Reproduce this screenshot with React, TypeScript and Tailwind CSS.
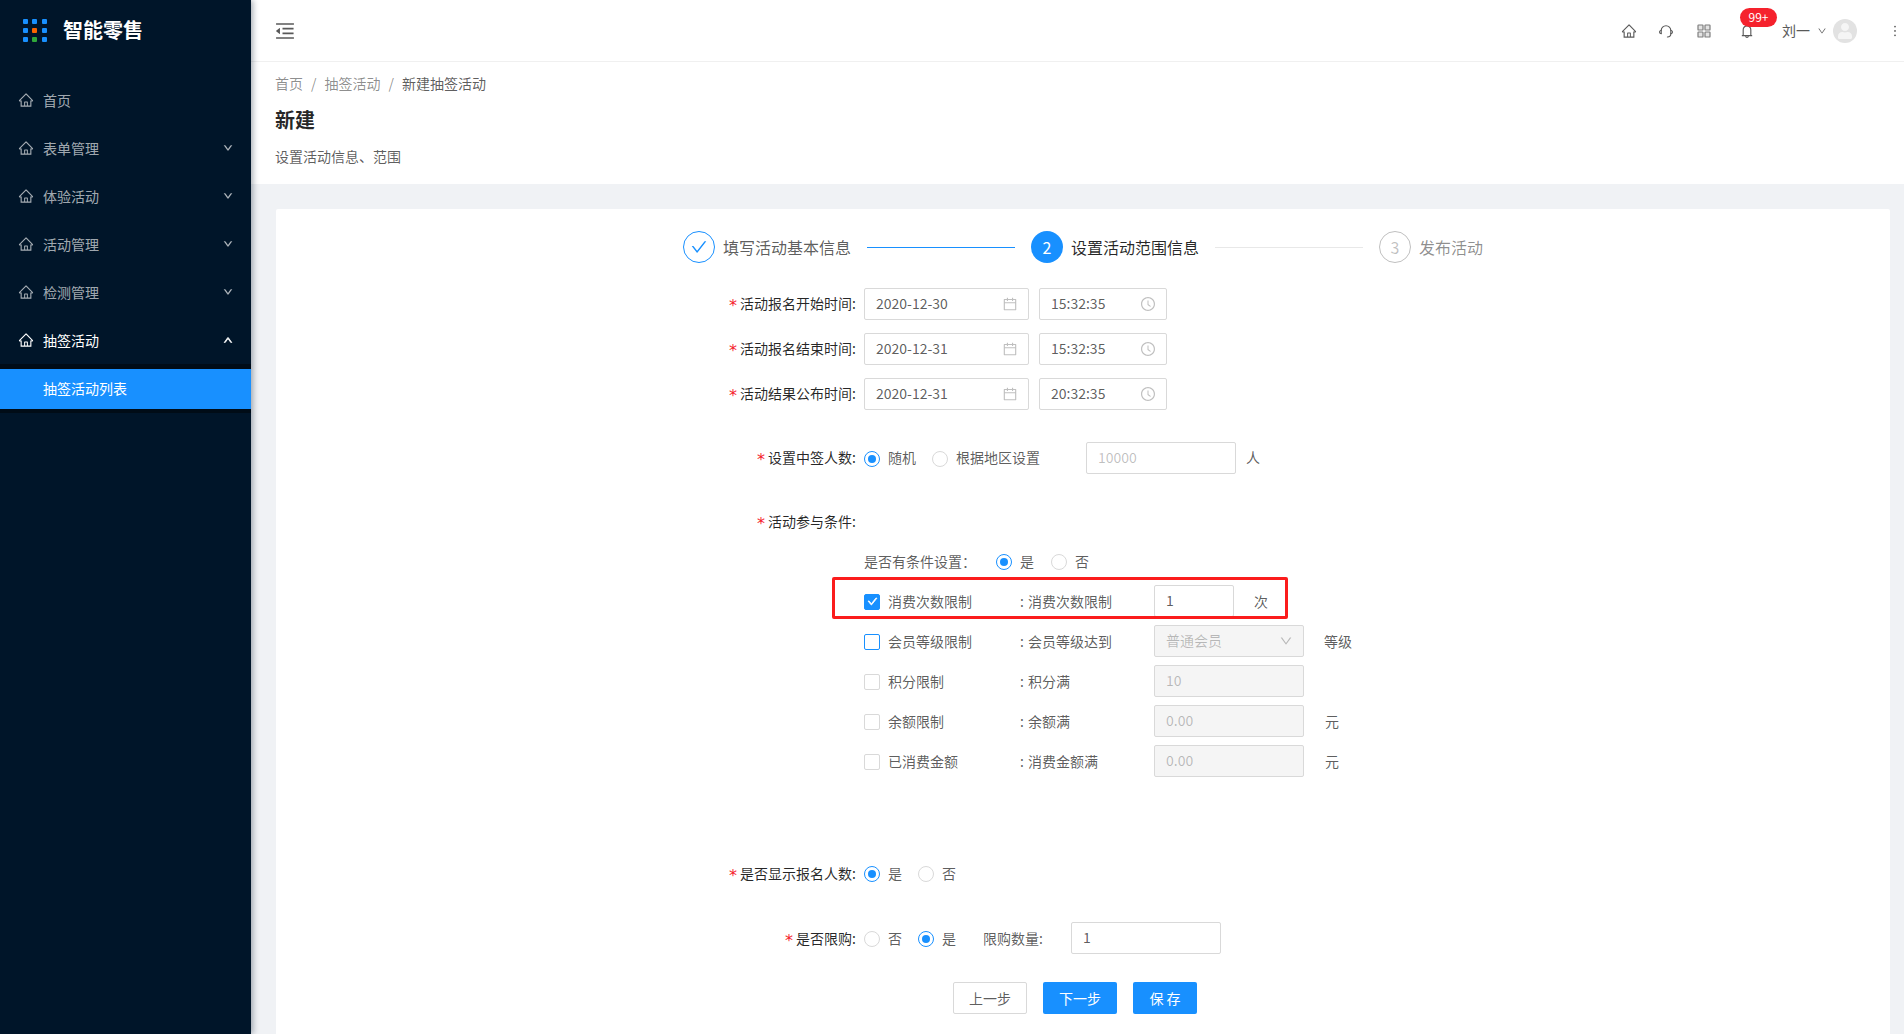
import React from "react";
import {
  AiOutlineHome, AiOutlineDown, AiOutlineUp,
  AiOutlineMore, AiOutlineCalendar, AiOutlineClockCircle, AiOutlineCheck, AiOutlineBell,
} from "react-icons/ai";
import { FaUser } from "react-icons/fa";

const FONT = '"Noto Sans CJK SC", "Liberation Sans", sans-serif';

function OutdentIcon() {
  return (
    <svg viewBox="64 64 896 896" width="20" height="20" fill="currentColor">
      <path d="M408 442h480c4.4 0 8-3.6 8-8v-56c0-4.4-3.6-8-8-8H408c-4.4 0-8 3.6-8 8v56c0 4.4 3.6 8 8 8zm-8 204c0 4.4 3.6 8 8 8h480c4.4 0 8-3.6 8-8v-56c0-4.4-3.6-8-8-8H408c-4.4 0-8 3.6-8 8v56zm504-486H120c-4.4 0-8 3.6-8 8v56c0 4.4 3.6 8 8 8h784c4.4 0 8-3.6 8-8v-56c0-4.4-3.6-8-8-8zm0 632H120c-4.4 0-8 3.6-8 8v56c0 4.4 3.6 8 8 8h784c4.4 0 8-3.6 8-8v-56c0-4.4-3.6-8-8-8zM115.4 518.9L271.7 642c5.8 4.6 14.4.5 14.4-6.9V388.9c0-7.4-8.5-11.5-14.4-6.9L115.4 505.1a8.74 8.74 0 0 0 0 13.8z" />
    </svg>
  );
}

function HeadsetIcon() {
  return (
    <svg viewBox="0 0 16 16" width="16" height="16" fill="none" stroke="currentColor" strokeWidth="1.1" strokeLinecap="round">
      <path d="M3.2 10.5V7.6a4.8 4.8 0 0 1 9.6 0v3.4c0 1.9-1.4 2.9-3.4 3" />
      <path d="M3.2 7.2c-1 .3-1.7.9-1.7 1.8s.7 1.5 1.7 1.8" />
      <path d="M12.8 7.2c1 .3 1.7.9 1.7 1.8s-.7 1.5-1.7 1.8" />
    </svg>
  );
}

function GridIcon() {
  return (
    <svg viewBox="0 0 14 14" width="14" height="14" fill="#e3e3e3" stroke="currentColor" strokeWidth="1.2">
      <rect x="1" y="1" width="5" height="5" rx="0.6" />
      <rect x="8" y="1" width="5" height="5" rx="0.6" />
      <rect x="1" y="8" width="5" height="5" rx="0.6" />
      <rect x="8" y="8" width="5" height="5" rx="0.6" />
    </svg>
  );
}

function MenuItem({ label, arrow, active }: { label: string; arrow?: "down" | "up"; active?: boolean }) {
  return (
    <div className={`flex h-[48px] items-center pl-[18px] pr-[18px] text-[14px] ${active ? "text-white" : "text-[#ffffffa6]"}`}>
      <AiOutlineHome className="mr-[9px] text-[16px]" />
      <span className="flex-1">{label}</span>
      {arrow === "down" && <AiOutlineDown className="text-[10px] stroke-[60]" />}
      {arrow === "up" && <AiOutlineUp className="text-[10px] stroke-[90]" />}
    </div>
  );
}

function Sidebar() {
  const dots = ["#1890ff", "#1890ff", "#1890ff", "#1890ff", "#fa6400", "#1890ff", "#1890ff", "#2fa83a", "#1890ff"];
  return (
    <aside className="z-10 flex w-[251px] shrink-0 flex-col bg-[#001529] shadow-[2px_0_6px_rgba(0,21,41,0.35)]">
      <div className="flex h-[60px] items-center pl-[23px]">
        <div className="grid w-[24px] grid-cols-3 gap-[4px]">
          {dots.map((c, i) => (
            <span key={i} className="h-[5px] w-[5px] rounded-[1px]" style={{ backgroundColor: c }} />
          ))}
        </div>
        <span className="ml-[16px] text-[20px] font-bold leading-none text-white">智能零售</span>
      </div>
      <nav className="mt-[16px]">
        <MenuItem label="首页" />
        <MenuItem label="表单管理" arrow="down" />
        <MenuItem label="体验活动" arrow="down" />
        <MenuItem label="活动管理" arrow="down" />
        <MenuItem label="检测管理" arrow="down" />
        <MenuItem label="抽签活动" arrow="up" active />
        <div className="bg-[#000c17] pb-[4px] pt-[5px]">
          <div className="flex h-[40px] items-center bg-[#1890ff] pb-[2px] pl-[43px] text-[14px] text-white">抽签活动列表</div>
        </div>
      </nav>
    </aside>
  );
}

function Topbar() {
  return (
    <header className="flex h-[62px] shrink-0 items-center border-b border-[#f0f0f0] bg-white pl-[24px] text-[#595959]">
      <OutdentIcon />
      <div className="ml-auto flex items-center">
        <AiOutlineHome className="text-[16px]" />
        <span className="ml-[21px] flex"><HeadsetIcon /></span>
        <span className="ml-[23px] flex text-[#7d7d7d]"><GridIcon /></span>
        <div className="relative ml-[28px] flex">
          <AiOutlineBell className="text-[16px]" />
          <span className="absolute left-[1px] top-[-15px] flex h-[19px] w-[37px] items-center justify-center rounded-full bg-[#f5222d] text-[12px] leading-none text-white">99+</span>
        </div>
        <span className="ml-[27px] text-[14px]">刘一</span>
        <AiOutlineDown className="ml-[7px] text-[10px]" />
        <span className="ml-[6px] flex h-[24px] w-[24px] items-center justify-center overflow-hidden rounded-full bg-[#e2e2e2] text-[#f5f5f5]">
          <FaUser className="text-[16px]" />
        </span>
        <AiOutlineMore className="ml-[30px] mr-[1px] text-[16px]" />
      </div>
    </header>
  );
}

function Step({ state, n, label }: { state: "done" | "active" | "todo"; n: number; label: string }) {
  const circle =
    state === "done"
      ? "border border-[#1890ff] text-[#1890ff]"
      : state === "active"
        ? "bg-[#1890ff] text-white"
        : "border border-[#00000040] text-[#00000040]";
  return (
    <div className="flex items-center">
      <span className={`flex h-[32px] w-[32px] items-center justify-center rounded-full text-[16px] ${circle}`}>
        {state === "done" ? <AiOutlineCheck className="text-[18px]" /> : n}
      </span>
      <span className={`ml-[8px] text-[16px] ${state === "active" ? "text-[#000000d9]" : state === "done" ? "text-[#000000a6]" : "text-[#00000073]"}`}>{label}</span>
    </div>
  );
}

function Label({ text, raised }: { text: string; raised?: boolean }) {
  return (
    <div className={`w-[580px] shrink-0 text-right text-[14px] text-[#000000d9] ${raised ? "pb-[2px]" : ""}`}>
      <span className="mr-[3px] align-[-2px] font-['DejaVu_Sans'] text-[16px] leading-[0] text-[#f5222d]">*</span>
      {text}:
    </div>
  );
}

function Box({ value, w, icon, placeholder, disabled, arrow }: { value: string; w: string; icon?: "cal" | "clock"; placeholder?: boolean; disabled?: boolean; arrow?: boolean }) {
  return (
    <div className={`flex h-[32px] shrink-0 items-center justify-between rounded-[2px] border border-[#d9d9d9] pl-[11px] pr-[10px] text-[14px] ${w} ${disabled ? "bg-[#f5f5f5] text-[#00000040]" : "bg-white"} ${placeholder ? "text-[#00000040]" : disabled ? "" : "text-[#000000a6]"}`}>
      <span className="mb-[2px]">{value}</span>
      {icon === "cal" && <AiOutlineCalendar className="text-[16px] text-[#00000040]" />}
      {icon === "clock" && <AiOutlineClockCircle className="text-[16px] text-[#00000040]" />}
      {arrow && <AiOutlineDown className="text-[14px] text-[#00000040]" />}
    </div>
  );
}

function Radio({ checked, label, gap = "mr-[16px]", raised }: { checked?: boolean; label: string; gap?: string; raised?: boolean }) {
  return (
    <span className={`flex items-center text-[14px] text-[#000000a6] ${gap}`}>
      <span className={`mt-[1px] flex h-[16px] w-[16px] items-center justify-center rounded-full border ${checked ? "border-[#1890ff]" : "border-[#d9d9d9]"}`}>
        {checked && <span className="h-[8px] w-[8px] rounded-full bg-[#1890ff]" />}
      </span>
      <span className={`ml-[8px] ${raised ? "mb-[2px]" : ""}`}>{label}</span>
    </span>
  );
}

function DateRow({ label, date, time }: { label: string; date: string; time: string }) {
  return (
    <div className="mb-[13px] flex items-center">
      <Label text={label} raised />
      <div className="ml-[8px] flex gap-[10px]">
        <Box value={date} w="w-[165px]" icon="cal" />
        <Box value={time} w="w-[128px]" icon="clock" />
      </div>
    </div>
  );
}

function CondRow({ check, name, desc, children }: { check: "on" | "focus" | "off"; name: string; desc: string; children: React.ReactNode }) {
  const box = check === "on" ? "bg-[#1890ff] border-[#1890ff]" : check === "focus" ? "border-[#1890ff]" : "border-[#d9d9d9]";
  return (
    <div className="flex h-[32px] items-center text-[14px] text-[#000000a6]">
      <span className={`mt-[1px] flex h-[16px] w-[16px] shrink-0 items-center justify-center rounded-[2px] border text-white ${box}`}>
        {check === "on" && <AiOutlineCheck className="text-[11px] stroke-[80]" />}
      </span>
      <span className="ml-[8px] w-[132px] shrink-0">{name}</span>
      <span className="w-[8px] shrink-0">:</span>
      <span className="w-[126px] shrink-0 whitespace-nowrap">{desc}</span>
      {children}
    </div>
  );
}

function Form() {
  return (
    <div className="pt-[22px]">
      <div className="ml-[407px] flex h-[32px] items-center">
        <Step state="done" n={1} label="填写活动基本信息" />
        <span className="mx-[16px] h-[1px] w-[148px] bg-[#1890ff]" />
        <Step state="active" n={2} label="设置活动范围信息" />
        <span className="mx-[16px] h-[1px] w-[148px] bg-[#e8e8e8]" />
        <Step state="todo" n={3} label="发布活动" />
      </div>

      <div className="mt-[25px]">
        <DateRow label="活动报名开始时间" date="2020-12-30" time="15:32:35" />
        <DateRow label="活动报名结束时间" date="2020-12-31" time="15:32:35" />
        <DateRow label="活动结果公布时间" date="2020-12-31" time="20:32:35" />
      </div>

      <div className="mt-[32px] flex items-center">
        <Label text="设置中签人数" raised />
        <div className="ml-[8px] flex items-center">
          <Radio checked label="随机" raised />
          <Radio label="根据地区设置" gap="mr-[46px]" raised />
          <Box value="10000" w="w-[150px]" placeholder />
          <span className="mb-[2px] ml-[10px] text-[14px] text-[#000000a6]">人</span>
        </div>
      </div>

      <div className="mt-[37px] flex h-[20px] items-center">
        <Label text="活动参与条件" />
      </div>

      <div className="ml-[588px] mt-[20px]">
        <div className="flex h-[20px] items-center text-[14px] text-[#000000a6]">
          <span className="w-[132px]">是否有条件设置：</span>
          <Radio checked label="是" gap="mr-[17px]" />
          <Radio label="否" />
        </div>
        <div className="relative mt-[14px] flex flex-col gap-[8px]">
          <div className="pointer-events-none absolute left-[-32px] top-[-8px] h-[42px] w-[456px] rounded-[2px] border-[3px] border-[#fb1c1c]" />
          <CondRow check="on" name="消费次数限制" desc="消费次数限制">
            <Box value="1" w="w-[80px]" />
            <span className="ml-[20px]">次</span>
          </CondRow>
          <CondRow check="focus" name="会员等级限制" desc="会员等级达到">
            <Box value="普通会员" w="w-[150px]" disabled arrow />
            <span className="ml-[20px]">等级</span>
          </CondRow>
          <CondRow check="off" name="积分限制" desc="积分满">
            <Box value="10" w="w-[150px]" disabled />
          </CondRow>
          <CondRow check="off" name="余额限制" desc="余额满">
            <Box value="0.00" w="w-[150px]" disabled />
            <span className="ml-[21px]">元</span>
          </CondRow>
          <CondRow check="off" name="已消费金额" desc="消费金额满">
            <Box value="0.00" w="w-[150px]" disabled />
            <span className="ml-[21px]">元</span>
          </CondRow>
        </div>
      </div>

      <div className="mt-[86px] flex h-[20px] items-center">
        <Label text="是否显示报名人数" />
        <div className="ml-[8px] flex items-center">
          <Radio checked label="是" />
          <Radio label="否" />
        </div>
      </div>

      <div className="mt-[39px] flex items-center">
        <Label text="是否限购" />
        <div className="ml-[8px] flex items-center">
          <Radio label="否" />
          <Radio checked label="是" gap="mr-[27px]" />
          <span className="w-[88px] text-[14px] text-[#000000a6]">限购数量:</span>
          <Box value="1" w="w-[150px]" />
        </div>
      </div>

      <div className="ml-[677px] mt-[28px] flex gap-[16px] text-[14px]">
        <button className="h-[32px] w-[74px] rounded-[2px] border border-[#d9d9d9] bg-white text-[#000000a6]">上一步</button>
        <button className="h-[32px] w-[74px] rounded-[2px] bg-[#1890ff] text-white">下一步</button>
        <button className="h-[32px] w-[64px] rounded-[2px] bg-[#1890ff] text-white">保 存</button>
      </div>
    </div>
  );
}

export default function App() {
  return (
    <div className="flex h-screen overflow-hidden bg-[#f0f2f5]" style={{ fontFamily: FONT }}>
      <Sidebar />
      <main className="flex min-w-0 flex-1 flex-col">
        <Topbar />
        <section className="h-[122px] shrink-0 bg-white px-[24px] pt-[11px]">
          <div className="flex h-[20px] items-center text-[14px] text-[#00000073]">
            <span>首页</span>
            <span className="mx-[8px]">/</span>
            <span>抽签活动</span>
            <span className="mx-[8px]">/</span>
            <span className="text-[#000000a6]">新建抽签活动</span>
          </div>
          <h1 className="mt-[13px] text-[20px] font-bold leading-[28px] text-[#000000d9]">新建</h1>
          <p className="mt-[12px] text-[14px] leading-[20px] text-[#000000a6]">设置活动信息、范围</p>
        </section>
        <section className="ml-[25px] mr-[14px] mt-[25px] flex-1 rounded-t-[2px] bg-white">
          <Form />
        </section>
      </main>
    </div>
  );
}
